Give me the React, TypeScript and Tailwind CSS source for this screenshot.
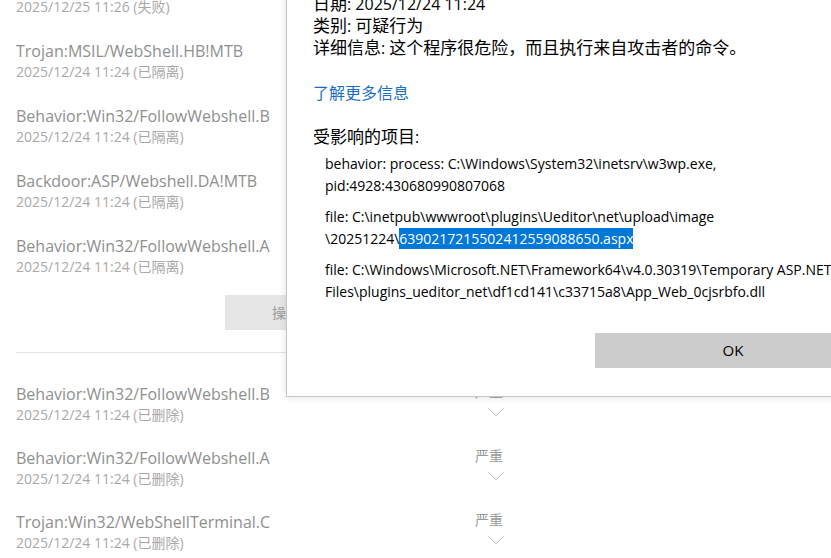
const font = { fontFamily: '"Open Sans", "Noto Sans CJK SC", sans-serif' };

type Threat = { name: string; date: string };

const upper: Threat[] = [
  { name: "Behavior:Win32/FollowWebshell.A", date: "2025/12/25 11:26 (失败)" },
  { name: "Trojan:MSIL/WebShell.HB!MTB", date: "2025/12/24 11:24 (已隔离)" },
  { name: "Behavior:Win32/FollowWebshell.B", date: "2025/12/24 11:24 (已隔离)" },
  { name: "Backdoor:ASP/Webshell.DA!MTB", date: "2025/12/24 11:24 (已隔离)" },
  { name: "Behavior:Win32/FollowWebshell.A", date: "2025/12/24 11:24 (已隔离)" },
];

const lower: Threat[] = [
  { name: "Behavior:Win32/FollowWebshell.B", date: "2025/12/24 11:24 (已删除)" },
  { name: "Behavior:Win32/FollowWebshell.A", date: "2025/12/24 11:24 (已删除)" },
  { name: "Trojan:Win32/WebShellTerminal.C", date: "2025/12/24 11:24 (已删除)" },
];

function Chevron() {
  return (
    <svg width="16" height="8" viewBox="0 0 16 8" fill="none">
      <polyline points="0.5,0.5 8,7.5 15.5,0.5" stroke="#b8b8b8" strokeWidth="1" />
    </svg>
  );
}

function Names({ item }: { item: Threat }) {
  return (
    <>
      <div className="text-[16px] leading-[22px] text-[#8f8f8f] whitespace-nowrap">{item.name}</div>
      <div className="text-[14px] leading-[20px] text-[#a9a9a9] whitespace-nowrap">{item.date}</div>
    </>
  );
}

function Row({ item }: { item: Threat }) {
  return (
    <div className="flex h-[64px] items-start">
      <div className="w-[459px] shrink-0">
        <Names item={item} />
      </div>
      <div className="flex flex-col items-start">
        <div className="mt-[-1px] text-[14px] leading-[20px] text-[#9a9a9a]">严重</div>
        <div className="ml-[13px] mt-[6px] flex">
          <Chevron />
        </div>
      </div>
    </div>
  );
}

export default function App() {
  return (
    <div className="relative h-[558px] w-[831px] overflow-hidden bg-white" style={font}>
      {/* history list behind the dialog */}
      <div className="mt-[-25px] pl-[16px]">
        {upper.map((t, i) => (
          <div key={i} className="h-[65px]">
            <Names item={t} />
          </div>
        ))}
        <div className="ml-[209px] mt-[-5px] flex h-[35px] w-[122px] items-center justify-center bg-[#e6e6e6] text-[14px] text-[#9a9a9a]">
          操作
        </div>
        <div className="mt-[22px] h-px w-[600px] bg-[#e3e3e3]" />
        <div className="mt-[30px]">
          {lower.map((t, i) => (
            <Row key={i} item={t} />
          ))}
        </div>
      </div>

      {/* details dialog */}
      <div className="absolute left-[286px] top-[-42px] w-[612px] border border-[#c6c6c6] bg-white pb-[28px] pl-[26px] pr-[26px] pt-[34px] text-black shadow-[0_0_8px_rgba(0,0,0,0.12)]">
        <div className="text-[16px] leading-[22px] whitespace-nowrap">
          <div>
            <span className="text-[17px]">日期</span>: 2025/12/24 11:24
          </div>
          <div>
            <span className="text-[17px]">类别</span>: <span className="text-[17px]">可疑行为</span>
          </div>
          <div>
            <span className="text-[17px]">详细信息</span>:{" "}
            <span className="text-[17px]">这个程序很危险，而且执行来自攻击者的命令。</span>
          </div>
        </div>
        <div className="mt-[23px] text-[16px] leading-[22px] text-[#1a6fc4]">了解更多信息</div>
        <div className="mt-[22px] text-[16px] leading-[22px]">
          <span className="text-[17px]">受影响的项目</span>:
        </div>
        <div className="mt-[5px] pl-[12px] text-[14px] leading-[22px] whitespace-nowrap">
          <div>
            behavior: process: C:\Windows\System32\inetsrv\w3wp.exe,
            <br />
            pid:4928:430680990807068
          </div>
          <div className="mt-[9px]">
            file: C:\inetpub\wwwroot\plugins\Ueditor\net\upload\image
            <br />
            \20251224\
            <span className="bg-[#0078d7] py-[1px] text-white">6390217215502412559088650.aspx</span>
          </div>
          <div className="mt-[9px]">
            file: C:\Windows\Microsoft.NET\Framework64\v4.0.30319\Temporary ASP.NET
            <br />
            Files\plugins_ueditor_net\df1cd141\c33715a8\App_Web_0cjsrbfo.dll
          </div>
        </div>
        <div className="mt-[30px] flex justify-end">
          <div className="flex h-[35px] w-[276px] items-center justify-center bg-[#cccccc] text-[15px]">OK</div>
        </div>
      </div>
    </div>
  );
}
